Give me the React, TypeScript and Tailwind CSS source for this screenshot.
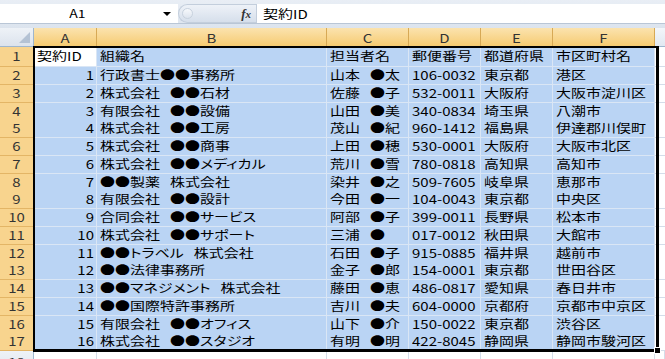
import React from "react";

const rows: string[][] = [
  ["契約ID", "組織名", "担当者名", "郵便番号", "都道府県", "市区町村名"],
  ["1", "行政書士●●事務所", "山本　●太", "106-0032", "東京都", "港区"],
  ["2", "株式会社　●●石材", "佐藤　●子", "532-0011", "大阪府", "大阪市淀川区"],
  ["3", "有限会社　●●設備", "山田　●美", "340-0834", "埼玉県", "八潮市"],
  ["4", "株式会社　●●工房", "茂山　●紀", "960-1412", "福島県", "伊達郡川俣町"],
  ["5", "株式会社　●●商事", "上田　●穂", "530-0001", "大阪府", "大阪市北区"],
  ["6", "株式会社　●●メディカル", "荒川　●雪", "780-0818", "高知県", "高知市"],
  ["7", "●●製薬　株式会社", "染井　●之", "509-7605", "岐阜県", "恵那市"],
  ["8", "有限会社　●●設計", "今田　●一", "104-0043", "東京都", "中央区"],
  ["9", "合同会社　●●サービス", "阿部　●子", "399-0011", "長野県", "松本市"],
  ["10", "株式会社　●●サポート", "三浦　●", "017-0012", "秋田県", "大館市"],
  ["11", "●●トラベル　株式会社", "石田　●子", "915-0885", "福井県", "越前市"],
  ["12", "●●法律事務所", "金子　●郎", "154-0001", "東京都", "世田谷区"],
  ["13", "●●マネジメント　株式会社", "藤田　●恵", "486-0817", "愛知県", "春日井市"],
  ["14", "●●国際特許事務所", "吉川　●夫", "604-0000", "京都府", "京都市中京区"],
  ["15", "有限会社　●●オフィス", "山下　●介", "150-0022", "東京都", "渋谷区"],
  ["16", "株式会社　●●スタジオ", "有明　●明", "422-8045", "静岡県", "静岡市駿河区"],
];

const cols = ["A", "B", "C", "D", "E", "F"];

function Txt({ children }: { children: React.ReactNode }) {
  return (
    <span className="inline-block scale-y-[0.8] origin-center whitespace-nowrap leading-none">
      {children}
    </span>
  );
}

function CellText({ t }: { t: string }) {
  const parts = t.split("　");
  return (
    <Txt>
      {parts.map((p, k) => (
        <React.Fragment key={k}>
          {k > 0 && <span className="tracking-[-5px]">　</span>}
          {p}
        </React.Fragment>
      ))}
    </Txt>
  );
}

function FormulaBar() {
  return (
    <div className="h-[28px] flex flex-col bg-linear-to-b from-[#E9EEF5] to-[#DCE4EE]">
      <div className="h-[4px]" />
      <div className="h-[19px] flex">
        <div className="w-[178px] bg-white flex items-center">
          <div className="w-[155px] text-center text-[14px] text-black">
            <Txt>A1</Txt>
          </div>
          <div className="w-[23px] flex items-center justify-center">
            <div className="w-0 h-0 border-l-[4px] border-r-[4px] border-t-[4px] border-l-transparent border-r-transparent border-t-black" />
          </div>
        </div>
        <div className="w-[78px] relative flex items-center justify-end pr-[5px] rounded-l-full bg-linear-to-b from-[#EEF2F8] to-[#D6DFEB] border border-[#C3CEDC] border-r-0">
          <div className="absolute left-[3px] top-[3px] w-[11px] h-[11px] rounded-full bg-linear-to-b from-[#F7F9FC] to-[#DDE4EE] border border-[#C8D2DE]" />
          <span className="font-['Liberation_Serif'] italic font-bold text-[13px] text-[#333] leading-none">
            f<span className="text-[11px]">x</span>
          </span>
        </div>
        <div className="flex-1 bg-white border-l border-[#C3CEDC] flex items-center pl-[6px] text-[15px] text-black">
          <Txt>契約ID</Txt>
        </div>
      </div>
      <div className="flex-1 border-t border-[#B9C6D6]" />
    </div>
  );
}

const grid = "grid grid-cols-[34px_63px_230px_82px_72px_72px_102px_1fr]";

function HeaderRow() {
  return (
    <div className={`${grid} h-[19px]`}>
      <div className="relative bg-linear-to-b from-[#EEF2F7] to-[#DCE3ED] border-r border-b border-[#9EB6CE]">
        <svg className="absolute right-[3px] bottom-[3px]" width="11" height="11" viewBox="0 0 11 11">
          <polygon points="11,0 11,11 0,11" fill="#B4C2D4" />
        </svg>
      </div>
      {cols.map((c) => (
        <div
          key={c}
          className="flex items-center justify-center bg-linear-to-b from-[#FBE3AE] to-[#F6CB70] border-r border-r-[#D7A955] border-b border-b-[#C9983E] text-[15px] text-[#333]"
        >
          <Txt>{c}</Txt>
        </div>
      ))}
      <div className="bg-linear-to-b from-[#F3F6FA] to-[#E1E8F1] border-b border-[#9EB6CE]" />
    </div>
  );
}

function DataRow({ r, i }: { r: string[]; i: number }) {
  const h = i === 0 ? "h-[20px]" : "h-[17.75px]";
  return (
    <div className={`${grid} ${h}`}>
      <div className="flex items-center justify-center pb-[2px] bg-[#F8D48E] border-r border-r-[#C99A4C] border-b border-b-[#E3B566] text-[15px] text-[#333]">
        <Txt>{i + 1}</Txt>
      </div>
      {r.map((t, j) => {
        const active = i === 0 && j === 0;
        const num = i > 0 && j === 0;
        return (
          <div
            key={j}
            className={`flex items-center pb-[2px] overflow-hidden border-r border-b border-[#DAE6F5] text-[15px] text-black ${
              active ? "bg-white pl-[2px]" : "bg-[#BAD4F4]"
            } ${num ? "justify-end pr-[2px]" : "pl-[3px]"}`}
          >
            <CellText t={t} />
          </div>
        );
      })}
      <div className="bg-white border-b border-[#D4DDE9]" />
    </div>
  );
}

function LastRow() {
  return (
    <div className={`${grid} h-[8px] overflow-hidden`}>
      <div className="flex justify-center pt-[3px] bg-linear-to-b from-[#EEF2F7] to-[#E2E8F0] border-r border-[#9EB6CE] text-[15px] text-[#333] leading-none">
        <Txt>18</Txt>
      </div>
      {[0, 1, 2, 3, 4, 5, 6].map((k) => (
        <div key={k} className="bg-white border-r border-[#D4DDE9]" />
      ))}
    </div>
  );
}

export default function App() {
  return (
    <div className="relative w-[665px] h-[359px] overflow-hidden bg-white font-['Noto_Sans_CJK_JP',sans-serif] [font-feature-settings:'palt']">
      <FormulaBar />
      <HeaderRow />
      {rows.map((r, i) => (
        <DataRow key={i} r={r} i={i} />
      ))}
      <LastRow />
      <div className="absolute left-[33px] top-[46px] w-[626px] h-[306px] border-l-2 border-t-2 border-r-[3px] border-b-[3px] border-black pointer-events-none" />
      <div className="absolute left-[654px] top-[347px] w-[7px] h-[7px] bg-black border border-white" />
    </div>
  );
}
